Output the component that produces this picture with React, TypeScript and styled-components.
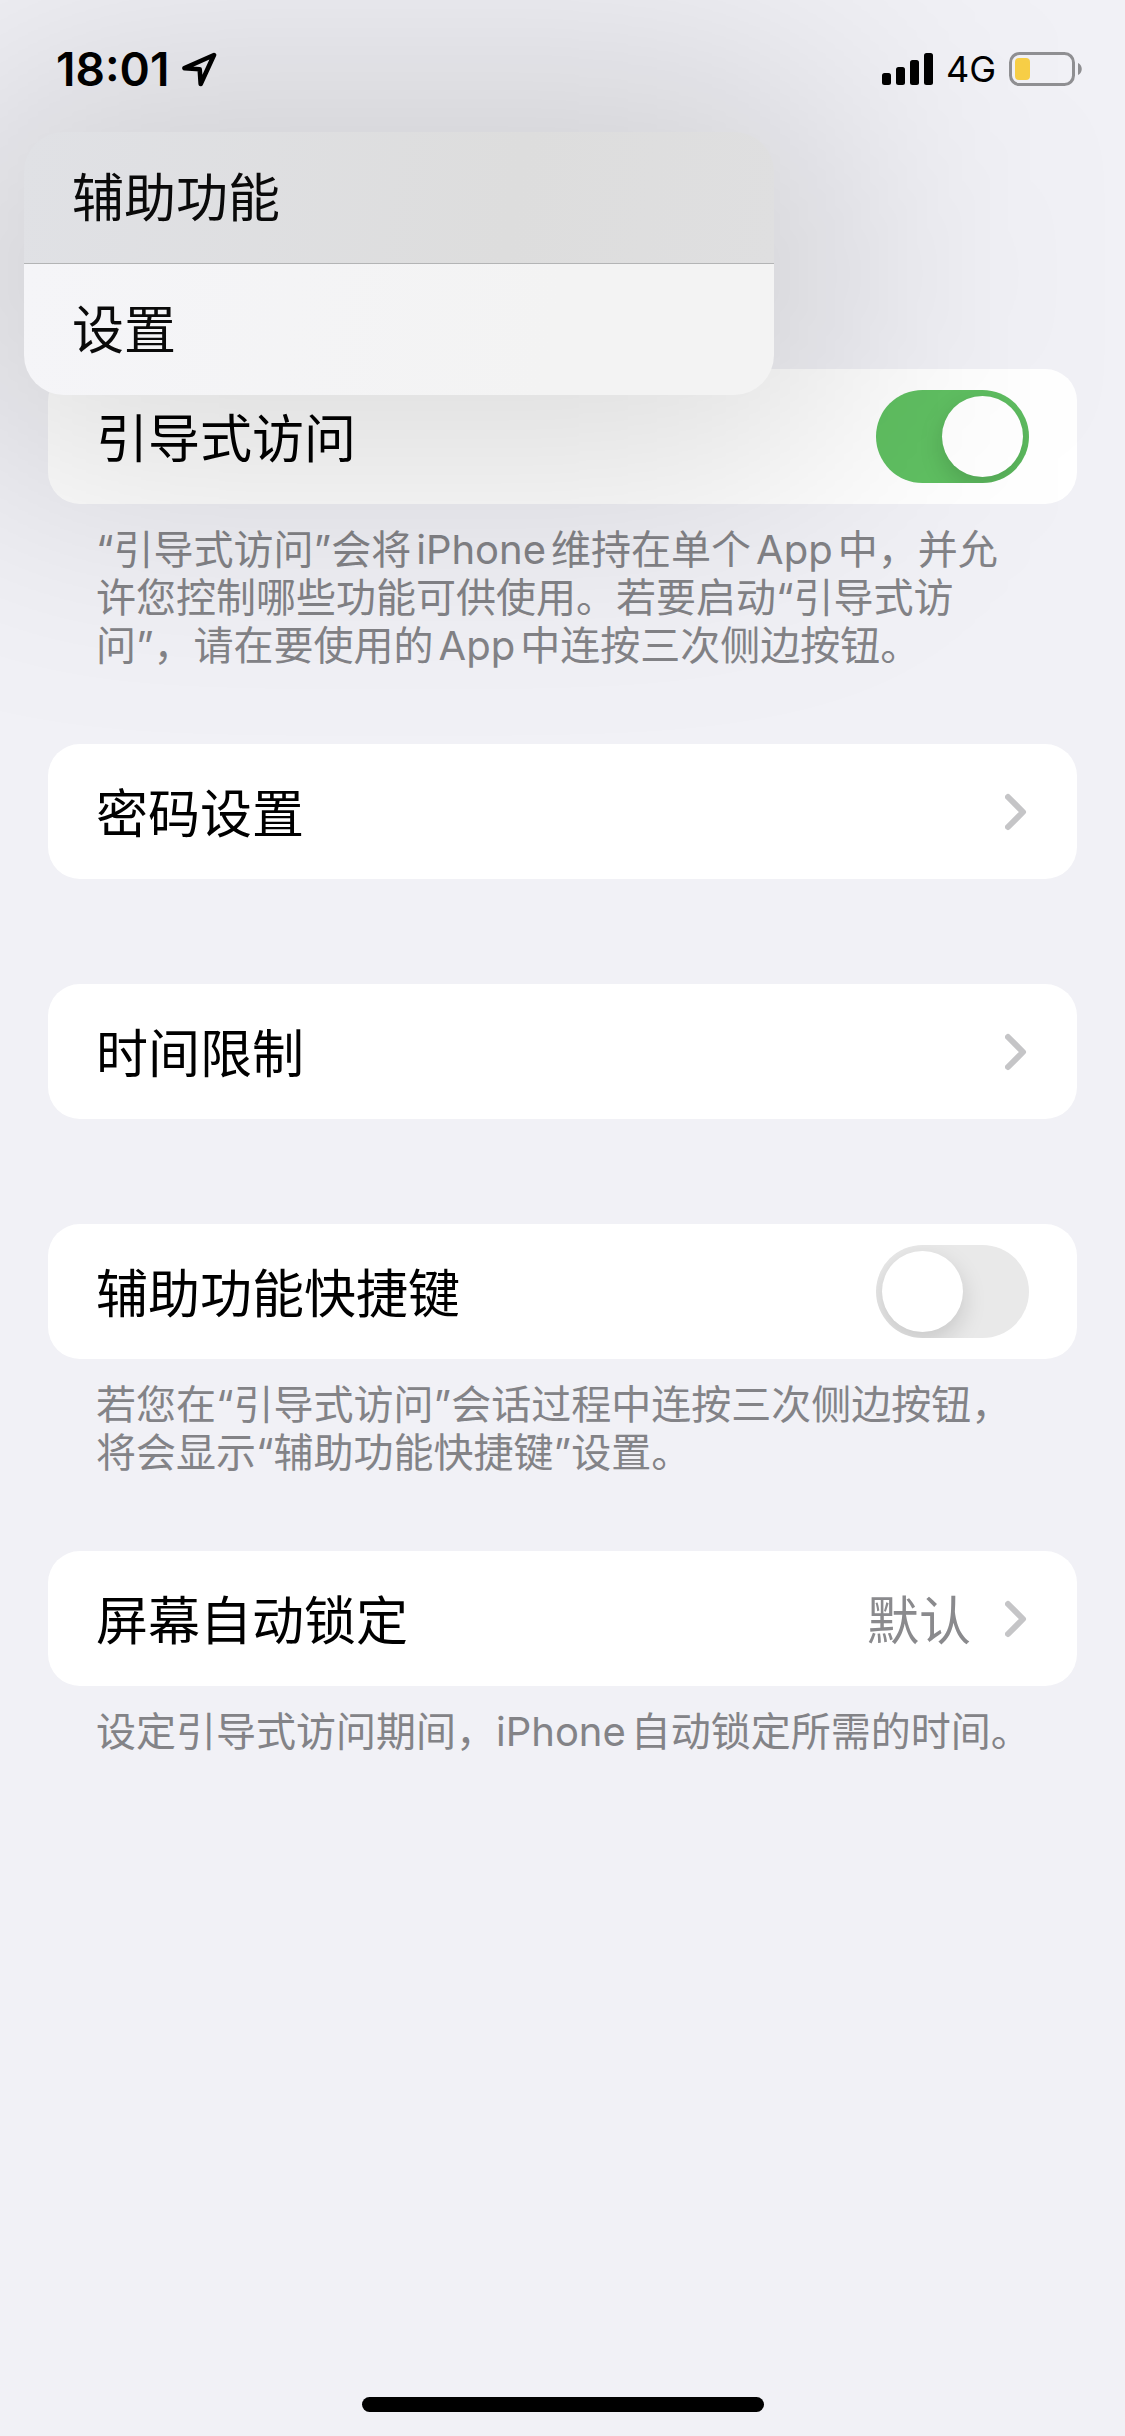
import React, { useId, useState } from "react";
import styled, { createGlobalStyle, css } from "styled-components";

const GlobalStyle = createGlobalStyle`
  * {
    box-sizing: border-box;
  }
  body {
    margin: 0;
    background: #f1f1f6;
    font-family: Inter, "Liberation Sans", "Noto Sans CJK SC", sans-serif;
    color: #000;
    text-autospace: normal;
  }
  button {
    font: inherit;
    color: inherit;
  }
`;

const Page = styled.div`
  display: flex;
  flex-direction: column;
  min-height: 100vh;
  overflow: clip;
`;

const StatusBar = styled.header`
  position: relative;
  z-index: 3;
  display: flex;
  align-items: center;
  justify-content: space-between;
  height: 132px;
  padding: 6px 42px 0 56px;
`;

const StatusGroup = styled.div<{ $gap: number }>`
  display: flex;
  align-items: center;
  gap: ${({ $gap }) => $gap}px;
`;

const Clock = styled.time`
  font-size: 46px;
  line-height: 48px;
  font-weight: 600;
`;

const Network = styled.span`
  font-size: 36px;
  line-height: 48px;
`;

const NavArea = styled.nav`
  position: relative;
  z-index: 2;
  height: 132px;
`;

const BackMenu = styled.ul`
  position: absolute;
  top: 0;
  left: 24px;
  width: min(750px, calc(100% - 48px));
  margin: 0;
  padding: 0;
  list-style: none;

  &::before {
    content: "";
    position: absolute;
    z-index: -1;
    inset: -60px -70px -80px;
    border-radius: 100px;
    background: rgba(0, 0, 0, 0.145);
    filter: blur(130px);
    pointer-events: none;
  }
`;

const MenuButton = styled.button<{ $active?: boolean }>`
  display: block;
  width: 100%;
  height: 131px;
  padding: 2px 48px 0;
  border: 0;
  text-align: left;
  font-size: 52px;
  font-weight: 390;
  line-height: 72px;
  color: #0a0a0a;
  ${({ $active }) =>
    $active
      ? css`
          height: 132px;
          border-bottom: 1px solid #b3b4b5;
          border-radius: 40px 40px 0 0;
          background: linear-gradient(100deg, #e0e1e5, #dddddd 65%, #dfdfe0);
        `
      : css`
          border-radius: 0 0 40px 40px;
          background: linear-gradient(100deg, #f5f5f8, #f3f3f3 70%);
        `}
`;

const Settings = styled.main`
  flex: 1;
  padding: 105px 48px 0;
`;

const Group = styled.section<{ $hasNote?: boolean }>`
  padding-bottom: ${({ $hasNote }) => ($hasNote ? 74 : 105)}px;
`;

const rowStyle = css`
  display: flex;
  align-items: center;
  width: 100%;
  height: 135px;
  padding: 0 48px;
  border: 0;
  border-radius: 32px;
  background: #fff;
  font-size: 52px;
  font-weight: 390;
  line-height: 72px;
  text-align: left;
`;

const SwitchRow = styled.label`
  ${rowStyle}
`;

const LinkRow = styled.button`
  ${rowStyle}
`;

const RowTitle = styled.span`
  flex: 1;
  padding-top: 6px;
`;

const RowValue = styled.span`
  padding: 6px 34px 0 0;
  color: #8a8a8d;
`;

const Note = styled.p`
  margin: 0;
  padding: 22px 46px 0 48px;
  font-size: 40px;
  font-weight: 390;
  line-height: 48px;
  color: #838387;
`;

const Switch = styled.input`
  appearance: none;
  display: flex;
  width: 153px;
  height: 93px;
  margin: 0;
  padding: 6px;
  border-radius: 47px;
  background: #e9e9e9;
  overflow: hidden;

  &::before {
    content: "";
    width: 81px;
    height: 81px;
    border-radius: 50%;
    background: #fff;
    box-shadow: 0 9px 24px rgba(0, 0, 0, 0.15);
  }

  &:checked {
    justify-content: flex-end;
    background: #60c062;
  }
`;

const HomeArea = styled.footer`
  display: flex;
  justify-content: center;
  padding-bottom: 24px;
`;

const HomeIndicator = styled.div`
  width: 402px;
  height: 15px;
  border-radius: 8px;
  background: #000;
`;

const LocationIcon = () => (
  <svg width="36" height="36" viewBox="0 0 36 36" aria-hidden="true">
    <path
      d="M33 4 3.5 17.2 18.7 18.2 19.7 33Z"
      fill="none"
      stroke="#000"
      strokeWidth="4.6"
      strokeLinejoin="round"
    />
  </svg>
);

const SignalIcon = () => (
  <svg width="51" height="32" viewBox="0 0 51 32" aria-hidden="true">
    <rect x="0" y="20" width="9" height="12" rx="2.5" />
    <rect x="14" y="14" width="9" height="18" rx="2.5" />
    <rect x="28" y="7" width="9" height="25" rx="2.5" />
    <rect x="42" y="0" width="9" height="32" rx="2.5" />
  </svg>
);

const BatteryIcon = () => (
  <svg width="74" height="34" viewBox="0 0 74 34" aria-hidden="true">
    <rect x="1.5" y="1.5" width="63" height="31" rx="9" fill="none" stroke="#8f8f92" strokeWidth="3" />
    <rect x="6" y="6" width="15" height="22" rx="4" fill="#f7ce46" />
    <path d="M69 11c5 2 5 10 0 12z" fill="#8f8f92" />
  </svg>
);

const Chevron = () => (
  <svg width="24" height="38" viewBox="0 0 24 38" aria-hidden="true">
    <path
      d="M3 4 18 19 3 34"
      fill="none"
      stroke="#c5c5c7"
      strokeWidth="6"
      strokeLinecap="round"
      strokeLinejoin="round"
    />
  </svg>
);

type ToggleProps = { title: string; initial: boolean; note: string };

function ToggleGroup({ title, initial, note }: ToggleProps) {
  const [on, setOn] = useState(initial);
  const id = useId();
  return (
    <Group $hasNote>
      <SwitchRow htmlFor={id}>
        <RowTitle>{title}</RowTitle>
        <Switch id={id} type="checkbox" role="switch" checked={on} onChange={() => setOn(!on)} />
      </SwitchRow>
      <Note>{note}</Note>
    </Group>
  );
}

type LinkProps = { title: string; value?: string; note?: string };

function LinkGroup({ title, value, note }: LinkProps) {
  return (
    <Group $hasNote={Boolean(note)}>
      <LinkRow type="button">
        <RowTitle>{title}</RowTitle>
        {value && <RowValue>{value}</RowValue>}
        <Chevron />
      </LinkRow>
      {note && <Note>{note}</Note>}
    </Group>
  );
}

export default function App() {
  return (
    <Page lang="zh-CN">
      <GlobalStyle />
      <StatusBar>
        <StatusGroup $gap={12}>
          <Clock>18:01</Clock>
          <LocationIcon />
        </StatusGroup>
        <StatusGroup $gap={13}>
          <SignalIcon />
          <Network>4G</Network>
          <BatteryIcon />
        </StatusGroup>
      </StatusBar>
      <NavArea>
        <BackMenu>
          <li>
            <MenuButton type="button" $active>
              辅助功能
            </MenuButton>
          </li>
          <li>
            <MenuButton type="button">设置</MenuButton>
          </li>
        </BackMenu>
      </NavArea>
      <Settings>
        <ToggleGroup
          title="引导式访问"
          initial={true}
          note="“引导式访问”会将iPhone维持在单个App中，并允许您控制哪些功能可供使用。若要启动“引导式访问”，请在要使用的App中连按三次侧边按钮。"
        />
        <LinkGroup title="密码设置" />
        <LinkGroup title="时间限制" />
        <ToggleGroup
          title="辅助功能快捷键"
          initial={false}
          note="若您在“引导式访问”会话过程中连按三次侧边按钮，将会显示“辅助功能快捷键”设置。"
        />
        <LinkGroup
          title="屏幕自动锁定"
          value="默认"
          note="设定引导式访问期间，iPhone自动锁定所需的时间。"
        />
      </Settings>
      <HomeArea>
        <HomeIndicator />
      </HomeArea>
    </Page>
  );
}
